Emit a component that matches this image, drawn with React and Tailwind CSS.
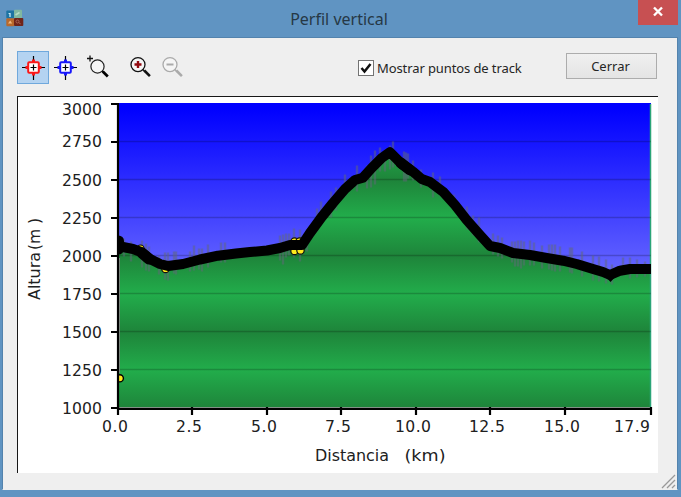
import React from "react";

const PROFILE =
  "118,246 133,249 141,252 150,259 160,264 168,266 183,264 200,259.5 218,255.7 236,253.5 250,252 267,250.5 280,248 290,245 302,245 310,233 321.7,217 333,203 345,189 355,180 363,177.7 371.7,168 381.7,158 390,152.2 401.7,164 413,171.7 421.7,179 430,182 443,191.7 455,205 466.7,220 480,235 490,246 500,248 513,253 530,255 546.7,258 563,260.7 576.7,264 593,269 603,272 610,275 620,270.7 630,269 651,269";

const Y_TICKS = [
  [3000, 104], [2750, 142], [2500, 180], [2250, 218], [2000, 256],
  [1750, 294], [1500, 332], [1250, 370], [1000, 408],
];

const X_TICKS = [
  ["0.0", 118, 102, 26], ["2.5", 192, 176, 26], ["5.0", 267, 251, 26],
  ["7.5", 341, 325, 26], ["10.0", 416, 395, 36], ["12.5", 490, 469, 36],
  ["15.0", 565, 544, 36], ["17.9", 651, 614, 36],
];

// Track point markers: x, top, bottom
const TRACK_MARKS = [
  [124, 239, 256], [131, 242, 261], [142, 241, 267], [146, 244, 270], [149, 247, 271],
  [159, 256, 274], [165, 253, 279], [168, 253, 280], [174, 252, 273], [176, 252, 274],
  [190, 252, 271], [194, 246, 270], [199, 249, 269], [202, 249, 271], [208, 245, 267],
  [221, 243, 262], [225, 243, 262], [280, 236, 260], [283, 235, 264], [286, 234, 257],
  [289, 234, 255], [294, 229, 257], [300, 230, 261], [307, 230, 251], [317, 209, 231],
  [321, 202, 222], [331, 192, 217], [336, 188, 210], [345, 175, 196], [357, 166, 191],
  [367, 166, 188], [371, 156, 187], [375, 151, 184], [380, 148, 171], [385, 151, 171],
  [390, 146, 169], [393, 142, 167], [404, 152, 181], [406, 153, 181], [408, 154, 178],
  [413, 161, 180], [421, 170, 187], [433, 173, 197], [440, 177, 195], [454, 195, 209],
  [467, 207, 229], [473, 216, 235], [479, 218, 242], [493, 234, 254], [498, 236, 256],
  [502, 238, 258], [512, 242, 262], [515, 242, 266], [518, 241, 266], [521, 241, 268],
  [524, 242, 265], [530, 241, 265], [534, 243, 265], [542, 246, 268], [549, 245, 269],
  [552, 245, 270], [555, 245, 271], [560, 247, 271], [570, 248, 272], [572, 248, 273],
  [582, 252, 276], [593, 256, 280], [599, 257, 281], [606, 260, 283], [612, 265, 284],
  [623, 258, 275], [630, 258, 278], [637, 260, 277], [645, 262, 276],
];

const Target = ({ color }) => (
  <svg className="size-8 shrink-0" viewBox="0 0 32 32" fill="none">
    <path d="M16.5 4v24M5 15.5h23" stroke="#000" strokeWidth="1.2" />
    <path d="M16.5 7.5v16M8.5 15.5h16" stroke={color} strokeWidth="3" />
    <rect x="11.2" y="10.2" width="10.6" height="10.6" rx="1" stroke={color} strokeWidth="2" fill="#fff" />
    <path d="M16.5 12.5v6M13.5 15.5h6" stroke="#000" strokeWidth="1.2" />
  </svg>
);

const Magnifier = ({ stroke, children }) => (
  <svg className="size-8" viewBox="0 0 32 32" fill="none">
    <circle cx="14" cy="12.6" r="7" fill="#f5f5f5" stroke={stroke} strokeWidth="1.3" />
    <path d="M18.8 17.5l2 2" stroke={stroke} strokeWidth="1.3" />
    <path d="M20.3 18.5l5.6 5.6" stroke={stroke} strokeWidth="2.6" />
    {children}
  </svg>
);

const AppIcon = () => (
  <svg className="size-[18px] shrink-0" viewBox="0 0 18 18">
    <rect x="0.3" y="1.6" width="8" height="8" rx="1" fill="#1c73a3" />
    <rect x="8" y="0.8" width="8" height="8.4" rx="1" fill="#80b7a0" />
    <rect x="0.3" y="9.2" width="8" height="8" rx="1" fill="#b8692c" />
    <rect x="8" y="9" width="9.3" height="8" rx="1" fill="#702318" />
    <path d="M3.2 4v1M4 4v4" stroke="#c9edf8" strokeWidth="1.3" />
    <path d="M9.5 6l4-2.5" stroke="#b3dbc4" strokeWidth="1.5" />
    <path d="M2 14.5l2.2-3 2 3z" fill="#f0b983" />
    <circle cx="11.5" cy="12.5" r="1.5" fill="none" stroke="#a96555" />
    <path d="M12.7 13.7l2 1.2" stroke="#a96555" />
  </svg>
);

function ProfileChart() {
  return (
    <svg className="block h-full w-full" viewBox="18 97 640 376" fontFamily="'DejaVu Sans', Verdana, sans-serif" fontSize="15.6" fill="#202020">
      <defs>
        <linearGradient id="sky" gradientUnits="userSpaceOnUse" x1="0" y1="108" x2="0" y2="270">
          <stop stopColor="#0000ff" />
          <stop offset="1" stopColor="#6464ff" />
        </linearGradient>
        <linearGradient id="land" gradientUnits="userSpaceOnUse" x1="0" y1="256" x2="0" y2="294" spreadMethod="reflect">
          <stop stopColor="#1e843a" />
          <stop offset="1" stopColor="#22ad4b" />
        </linearGradient>
        <clipPath id="plot"><rect x="117" y="103" width="534" height="306" /></clipPath>
      </defs>
      <rect x="118" y="103" width="533" height="304" fill="url(#sky)" />
      <polygon points={`118,407 ${PROFILE} 651,407`} fill="url(#land)" />
      <path d="M650.5 104v303" stroke="#2ba477" strokeWidth="1.5" />
      {Y_TICKS.slice(1, -1).map(([v, y]) => (
        <path key={v} d={`M119 ${y - 0.5}H651`} stroke="#000" strokeOpacity=".2" strokeWidth="1.4" />
      ))}
      <g stroke="#5f6878" strokeOpacity=".5" strokeWidth="2.4">
        {TRACK_MARKS.map(([x, a, b]) => <path key={x} d={`M${x} ${a - 0.5}V${b + 0.5}`} />)}
      </g>
      <g fill="#ffe91c" stroke="#111" strokeWidth="1.2">
        <circle cx="140.5" cy="248.7" r="3.7" />
        <circle cx="165.5" cy="269" r="3.7" />
        <circle cx="294.5" cy="241.5" r="3.7" />
        <circle cx="299.5" cy="241.5" r="3.7" />
        <circle cx="294.5" cy="251" r="3.7" />
        <circle cx="300.5" cy="250.5" r="3.7" />
      </g>
      <g clipPath="url(#plot)">
        <polyline points={PROFILE} fill="none" stroke="#000" strokeWidth="10" strokeLinejoin="round" />
        <path d="M118.5 241v8M142 253l7 6M401 163l9 7" stroke="#000" strokeWidth="11" strokeLinecap="round" />
        <path d="M603 274l7.5 8 7.5-8z" fill="#000" />
        <circle cx="119.8" cy="378.3" r="3.6" fill="#ffe91c" stroke="#000" strokeWidth="1.4" />
      </g>
      <path d="M119.5 258v115M119 407.5h532" stroke="#839087" strokeWidth="1" fill="none" />
      <path d="M118 103v306M117 409h534" stroke="#000" strokeWidth="2.2" fill="none" />
      {Y_TICKS.map(([v, y]) => (
        <g key={v}>
          <path d={`M111 ${y}h7`} stroke="#000" strokeWidth="2" />
          <text x="62" y={v === 3000 ? 114.5 : v === 2750 ? 147 : y + 5.8} textLength="40">{v}</text>
        </g>
      ))}
      {X_TICKS.map(([v, x, tx, w]) => (
        <g key={v}>
          <path d={`M${x} 407v8`} stroke="#000" strokeWidth="2.2" />
          <text x={tx} y="432.3" textLength={w}>{v}</text>
        </g>
      ))}
      <text x="315" y="461" textLength="74" lengthAdjust="spacingAndGlyphs">Distancia</text>
      <text x="404.5" y="461" textLength="41" lengthAdjust="spacingAndGlyphs">(km)</text>
      <g transform="rotate(-90 40 300)">
        <text x="40" y="299.5" textLength="48" lengthAdjust="spacingAndGlyphs">Altura</text>
        <text x="90" y="299.5" textLength="32">(m )</text>
      </g>
    </svg>
  );
}

export default function App() {
  return (
    <div className="flex h-[497px] w-[681px] flex-col overflow-hidden bg-[#6094c2] font-['Noto_Sans',sans-serif] text-[#252525]">
      <header className="flex h-[37px] shrink-0 items-start pl-1.5">
        <div className="pt-[9px]"><AppIcon /></div>
        <h1 className="flex-1 pt-[7px] pl-4 text-center text-[16px] leading-[25px] text-[#263845]">Perfil vertical</h1>
        <button aria-label="Cerrar" className="mr-[3px] flex h-[25px] w-10 items-start justify-center bg-[#c75052] pt-[6px]">
          <svg className="size-3" viewBox="0 0 12 12" stroke="#fff" strokeWidth="2.4"><path d="M2 1.5l8 8M10 1.5l-8 8" /></svg>
        </button>
      </header>
      <main className="mr-[3px] ml-0.5 flex h-[453px] shrink-0 flex-col border border-[#5383ad] border-b-[#efefef] bg-[#efefef] pl-3.5">
        <div className="flex h-[58px] shrink-0 pt-3.5">
          <button className="-mt-px flex h-[33px] w-8 items-center justify-center border border-[#6fa8dc] bg-[#b4d3f1]"><Target color="#fb1717" /></button>
          <button className="size-8"><Target color="#1717fb" /></button>
          <button className="ml-px size-8">
            <svg className="size-8" viewBox="0 0 32 32" fill="none">
              <circle cx="15.5" cy="14.5" r="6.6" fill="#f5f5f5" stroke="#222" strokeWidth="1.2" />
              <path d="M5 6.5h6M8 3.5v6M20 19l2 2" stroke="#111" strokeWidth="1.3" />
              <path d="M20.8 19.5l5 5" stroke="#000" strokeWidth="2.7" />
            </svg>
          </button>
          <button className="ml-2.5 size-8"><Magnifier stroke="#111"><path d="M10.5 12.5h7M14 9v7" stroke="#920910" strokeWidth="2.4" /></Magnifier></button>
          <button className="size-8"><Magnifier stroke="#aaa"><path d="M10.5 12.5h7" stroke="#aaa" strokeWidth="2" /></Magnifier></button>
          <label className="mt-[7px] ml-[170px] flex h-[18px] w-[208px] items-center">
            <span className="flex size-4 shrink-0 items-center justify-center border border-[#737373] bg-white">
              <svg className="size-3" viewBox="0 0 12 12" fill="none"><path d="M1.5 6l3 3.5L10.5 2" stroke="#111" strokeWidth="2.5" /></svg>
            </span>
            <span className="ml-[3px] pt-px text-[13px] tracking-[-0.1px] whitespace-nowrap">Mostrar puntos de track</span>
          </label>
          <button className="mt-px flex h-[26px] w-[91px] items-center justify-center border border-[#acacac] bg-gradient-to-b from-[#f0f0f0] to-[#e4e4e4] pt-0.5 pr-0.5 text-[13px]">Cerrar</button>
        </div>
        <div className="h-[377px] w-[641px] shrink-0 border-t border-l border-[#171717] bg-white"><ProfileChart /></div>
        <div className="flex flex-1 justify-end">
          <svg className="size-4" viewBox="0 0 16 16" stroke="#999" strokeWidth="1.3"><path d="M1 15L14 2M6 15l8-8M11 15l3-3" /></svg>
        </div>
      </main>
    </div>
  );
}
